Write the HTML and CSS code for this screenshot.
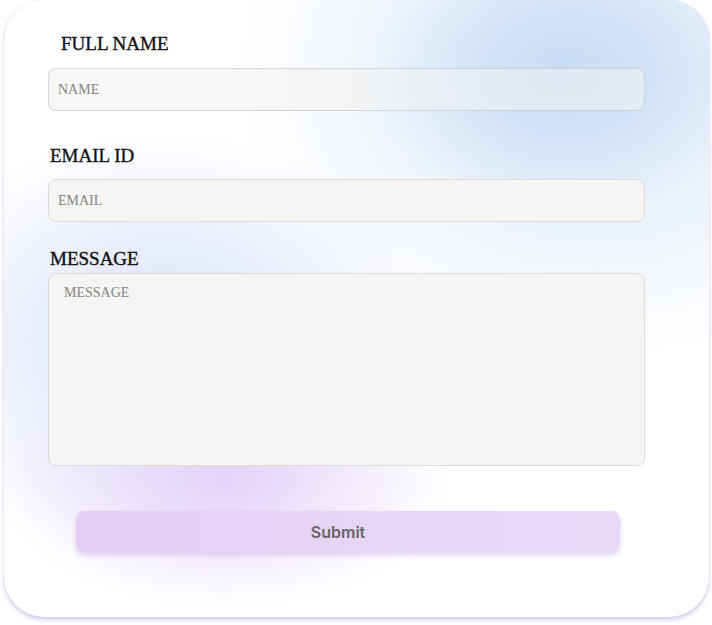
FILE: index.html
```html
<!DOCTYPE html>
<html>
<head>
<meta charset="utf-8">
<link rel="stylesheet" href="styles.css">
</head>
<body>
<div class="card">
  <form class="form">
    <label class="label label-first">FULL NAME</label>
    <input class="field field-glass" type="text" placeholder="NAME">
    <label class="label label-email">EMAIL ID</label>
    <input class="field" type="text" placeholder="EMAIL">
    <label class="label label-msg">MESSAGE</label>
    <textarea class="field area" placeholder="MESSAGE"></textarea>
    <button class="submit" type="button">Submit</button>
  </form>
</div>
</body>
</html>
```

FILE: styles.css
```css
html, body {
  margin: 0;
  padding: 0;
  background: #ffffff;
}
body {
  width: 712px;
  height: 625px;
  overflow: hidden;
}
.card {
  box-sizing: border-box;
  margin-left: 4px;
  width: 705px;
  height: 617px;
  border-radius: 40px;
  background:
    radial-gradient(ellipse 190px 140px at 555px 75px, rgba(198,219,243,0.95), rgba(198,219,243,0) 100%),
    radial-gradient(ellipse 360px 290px at 590px 70px, rgba(214,230,247,0.95), rgba(214,230,247,0) 100%),
    radial-gradient(ellipse 230px 130px at 220px 480px, rgba(226,208,247,0.9), rgba(226,208,247,0) 100%),
    radial-gradient(ellipse 270px 210px at 160px 340px, rgba(212,222,248,0.95), rgba(212,222,248,0) 100%),
    #ffffff;
  box-shadow: 0 3px 4px rgba(170,140,215,0.45), 0 0 1px rgba(150,150,170,0.35);
  padding: 32px 0 0 44px;
}
.form {
  display: flex;
  flex-direction: column;
  align-items: flex-start;
  width: 597px;
}
.label {
  font-family: "Liberation Serif", serif;
  font-size: 19px;
  line-height: 24px;
  color: #111111;
  -webkit-text-stroke: 0.35px #111;
}
.label-first {
  margin: 0 0 12px 13px;
}
.label-email {
  margin: 33px 0 11px 2px;
}
.label-msg {
  margin: 25px 0 2px 2px;
}
.field {
  box-sizing: border-box;
  width: 597px;
  height: 43px;
  border: 1px solid #dcdcdc;
  border-radius: 8px;
  background: #f6f5f3;
  padding: 0 0 0 9px;
  font-family: "Liberation Serif", serif;
  font-size: 14px;
  color: #333;
  outline: none;
  margin: 0;
}
.field::placeholder {
  color: #858585;
}
.field-glass {
  background: rgba(243,242,240,0.55);
  border-color: rgba(190,195,205,0.6);
}
.area {
  height: 193px;
  resize: none;
  padding: 11px 15px;
  line-height: 16px;
}
.submit {
  margin: 45px 0 0 28px;
  width: 544px;
  height: 41px;
  border: none;
  border-radius: 8px;
  padding: 0 20px 0 0;
  background: linear-gradient(90deg, #e3cff6, #eadaf6);
  box-shadow: 0 3px 5px rgba(190,160,225,0.45);
  font-family: Inter, sans-serif;
  font-size: 16px;
  font-weight: 600;
  color: #666666;
  cursor: pointer;
}
```
